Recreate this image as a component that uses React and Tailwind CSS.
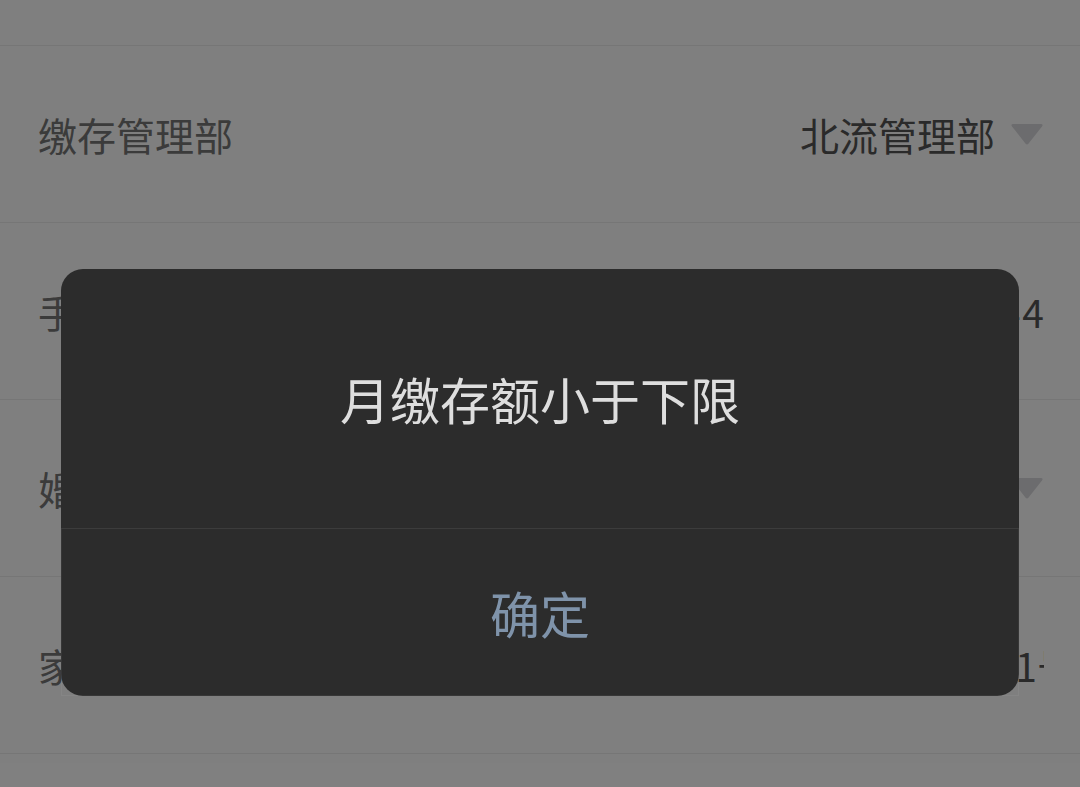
import React from "react";

const rows = [
  { label: "缴存管理部", value: "北流管理部", select: true },
  { label: "手机号码", value: "13877512344", phone: true },
  { label: "婚姻状况", value: "已婚", select: true },
  { label: "家庭住址", value: "北流市城南路1号", clip: true },
  { label: "月缴存额", value: "" },
];

function Caret() {
  return (
    <svg width="34" height="24" viewBox="0 0 34 24" className="shrink-0">
      <path d="M3 2 H31 Q33.5 2 32 4.5 L18.6 21.5 Q17 23.5 15.4 21.5 L2 4.5 Q0.5 2 3 2 Z" fill="#d9d9dd" />
    </svg>
  );
}

function Row({ label, value, select, clip, phone }) {
  return (
    <div className="h-[177px] border-b border-[#ececec] flex items-center pl-[38px] pr-[36px] text-[39px] leading-[1.3]">
      <span className="text-[#777777] shrink-0">{label}</span>
      {clip ? (
        <div className="flex-1 flex justify-end min-w-0 overflow-hidden">
          <span className="text-[#555555] whitespace-nowrap -mr-[32px]">{value}</span>
        </div>
      ) : (
        <div className="flex-1 flex items-center justify-end gap-[15px]">
          <span className={phone ? "text-[#555555] whitespace-nowrap tracking-[2px] -mr-[2px]" : "text-[#555555] whitespace-nowrap"}>
            {value}
          </span>
          {select && <Caret />}
        </div>
      )}
    </div>
  );
}

export default function App() {
  return (
    <div
      className="relative w-[1080px] h-[787px] overflow-hidden bg-white"
      style={{ fontFamily: '"Noto Sans CJK SC", "Noto Sans", sans-serif' }}
    >
      {/* list scrolled: the row above sits out of view */}
      <div className="pt-[45px] border-b-0">
        <div className="border-t border-[#ececec]">
          {rows.map((r) => (
            <Row key={r.label} {...r} />
          ))}
        </div>
      </div>

      <div className="absolute inset-0 bg-black/50">
        <div className="absolute left-[61px] top-[269px] w-[958px] h-[427px] bg-[#2c2c2c] rounded-[22px] flex flex-col">
          <div className="h-[260px] flex items-center justify-center border-b border-[#3c3c3c]">
            <p className="text-[50px] leading-[1.3] text-[#dedede]">月缴存额小于下限</p>
          </div>
          <button className="flex-1 flex items-center justify-center border-x border-b border-white/5 text-[50px] leading-[1.3] text-[#7f93aa]">
            确定
          </button>
        </div>
      </div>
    </div>
  );
}
